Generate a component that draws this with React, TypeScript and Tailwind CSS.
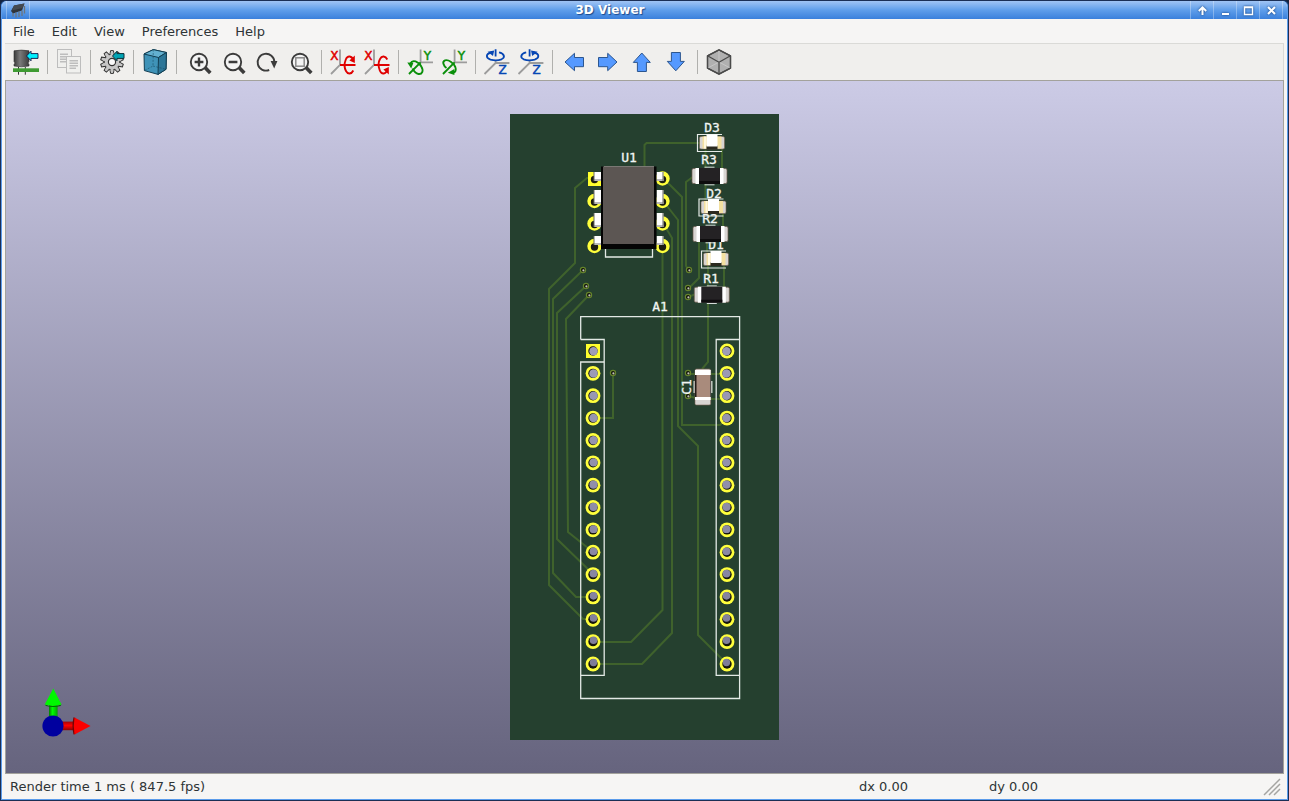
import type { ReactNode } from "react";

const menus = ["File", "Edit", "View", "Preferences", "Help"];

const cyanArrow = "M13.5 7 L18 2.2 V4.6 H25 V9.4 H18 V11.8 Z";

type Tool = { label: string; icon: ReactNode };

function Lens({ children }: { children?: ReactNode }) {
  return (
    <g fill="none" stroke="#3c3c3c" strokeWidth="1.9">
      <path d="M19 18.5 L24.3 24" strokeWidth="3.6" />
      <circle cx="13" cy="13" r="8.2" fill="#f4f4f4" />
      {children}
    </g>
  );
}

function AxisLetter({ x, y, color, children }: { x: number; y: number; color: string; children: string }) {
  return (
    <text x={x} y={y} textAnchor="middle" fill={color} stroke={color} strokeWidth="0.5" className="font-['DejaVu_Sans'] text-[12px]">
      {children}
    </text>
  );
}

function AxisX({ flip }: { flip?: boolean }) {
  return (
    <>
      <path d="M10 0.5 V16 L1 25" fill="none" stroke="#9c9c9c" strokeWidth="1.8" />
      <g fill="none" stroke="#e00000" strokeWidth="1.9" transform={flip ? "translate(0 32) scale(1 -1)" : undefined}>
        <path d="M10 16 H25.5" />
        <path d="M23.3 11.5 C22 6.5 17.5 6.2 15.8 10.5 C14.2 14.5 14.3 19 16 22 C17.8 25.5 21.5 25.2 23.3 21.5" />
        <path d="M24.8 6.4 V14 L19.4 11.6 Z" fill="#e00000" stroke="none" />
      </g>
      <AxisLetter x={4.4} y={11} color="#e00000">
        X
      </AxisLetter>
    </>
  );
}

function AxisY({ flip }: { flip?: boolean }) {
  return (
    <>
      <path d="M13.6 0.5 V13.4 H26" fill="none" stroke="#9c9c9c" strokeWidth="1.8" />
      <g fill="none" stroke="#0a8f0a" strokeWidth="1.9">
        <path d="M13.6 13.4 L2 25" />
        {flip ? (
          <>
            <path d="M5.5 19 C2.5 17 0.8 12.5 4 11.3 C7.5 10.2 12.5 14 14.3 18 C15.5 21 14.5 23.3 12 23.6" />
            <path d="M6.8 23.8 L13.4 20 L13.4 26 Z" fill="#0a8f0a" stroke="none" />
          </>
        ) : (
          <>
            <path d="M3.5 14.5 C5.5 10 11.5 12.5 14.3 17.5 C17 22 15 25.5 11.5 25 C9 24.5 7 22.5 5.5 19.5" />
            <path d="M0.3 13.6 L6.4 13.8 L4.2 19.4 Z" fill="#0a8f0a" stroke="none" />
          </>
        )}
      </g>
      <AxisLetter x={20.5} y={11} color="#0a8f0a">
        Y
      </AxisLetter>
    </>
  );
}

function AxisZ({ flip }: { flip?: boolean }) {
  return (
    <>
      <path d="M11.6 11 V14 H25.4 M11.6 14 L0.5 25" fill="none" stroke="#9c9c9c" strokeWidth="1.8" />
      <g fill="none" stroke="#0646b4" strokeWidth="1.8" transform={flip ? "translate(23.2 0) scale(-1 1)" : undefined}>
        <path d="M11.6 0.3 V7.5" />
        <path d="M7.5 3.5 C1.5 4.8 1.5 9 6.5 10.6 C10 11.6 14.5 11.5 17.5 10.3 C21.5 8.5 20.5 4.6 15 3.4" />
        <path d="M10.2 1.6 L9 7 L3.6 2.8 Z" fill="#0646b4" stroke="none" />
      </g>
      <AxisLetter x={18.6} y={25} color="#0646b4">
        Z
      </AxisLetter>
    </>
  );
}

function PanArrow({ d }: { d: string }) {
  return <path d={d} fill="#5599ff" stroke="#2c568f" strokeWidth="1" strokeLinejoin="round" />;
}

const gearTeeth = [0, 36, 72, 108, 144, 180, 216, 252, 288, 324];

const toolGroups: Tool[][] = [
  [
    {
      label: "Reload board",
      icon: (
        <>
          <defs>
            <linearGradient id="can">
              <stop offset="0" stopColor="#3a3a3a" />
              <stop offset="0.4" stopColor="#7a7a7a" />
              <stop offset="1" stopColor="#3c3c3c" />
            </linearGradient>
          </defs>
          <path d="M1 1.8 Q8.5 0.4 16 1.8 V12.5 L15 14 L16 15.5 V17 Q8.5 18.6 1 17 V15.5 L2 14 L1 12.5 Z" fill="url(#can)" stroke="#2e2e2e" strokeWidth="0.6" />
          <path d="M5.5 18 V25.7 M12.3 18 V25.7" stroke="#333" strokeWidth="1" />
          <rect x="0" y="19.3" width="26" height="3.7" fill="#3f9b33" />
          <path d={cyanArrow} fill="#00f0ff" stroke="#114" strokeWidth="0.9" />
        </>
      ),
    },
  ],
  [
    {
      label: "Copy image",
      icon: (
        <g stroke="#bdbdbd" strokeWidth="1">
          <rect x="1.5" y="0.5" width="14" height="18" fill="#efefed" />
          <path d="M4 5.2 H12 M4 7.7 H12 M4 10.2 H12 M4 12.7 H10" strokeWidth="1.6" />
          <rect x="10.5" y="7.5" width="14" height="16.5" fill="#f0f0ee" />
          <path d="M13.5 11.8 H22 M13.5 14.3 H22 M13.5 16.8 H22 M13.5 19.3 H20" strokeWidth="1.6" />
        </g>
      ),
    },
  ],
  [
    {
      label: "Render options",
      icon: (
        <>
          <g fill="#c6c6c6" stroke="#333" strokeWidth="1">
            {gearTeeth.map((a) => (
              <path key={a} d="M10.8 6 L11.6 1.6 H14.4 L15.2 6" transform={`rotate(${a} 13 13)`} />
            ))}
            <circle cx="13" cy="13" r="7.8" />
          </g>
          {gearTeeth.map((a) => (
            <path key={a} d="M11.4 6.5 L12 2.6 H14 L14.6 6.5 Z" fill="#c6c6c6" transform={`rotate(${a} 13 13)`} />
          ))}
          <circle cx="13" cy="13" r="3.6" fill="#fafafa" stroke="#333" strokeWidth="1.2" />
          <path d={cyanArrow} fill="#00a5b5" stroke="#0c2f38" strokeWidth="1" />
        </>
      ),
    },
  ],
  [
    {
      label: "Raytracing",
      icon: (
        <g stroke="#123e52" strokeWidth="1" strokeLinejoin="round">
          <path d="M2 5 L11.3 0.6 L24.4 3.5 L24 20.3 L16 25.4 L2.4 21.6 Z" fill="#3f93b8" />
          <path d="M2 5 L16.5 8.5 L24.4 3.5 L11.3 0.6 Z" fill="#63b0d0" />
          <path d="M16.5 8.5 L24.4 3.5 L24 20.3 L16 25.4 Z" fill="#2c7698" />
          <path d="M11.3 0.6 L11 17 L2.4 21.6 M11 17 L24 20.3" fill="none" strokeWidth="0.5" strokeDasharray="2 1.4" />
        </g>
      ),
    },
  ],
  [
    { label: "Zoom in", icon: <g transform="translate(1 0)"><Lens><path d="M13 8.6 V17.4 M8.6 13 H17.4" strokeWidth="2.4" /></Lens></g> },
    { label: "Zoom out", icon: <g transform="translate(1 0)"><Lens><path d="M8.6 13 H17.4" strokeWidth="2.4" /></Lens></g> },
    {
      label: "Redraw",
      icon: (
        <>
          <path d="M16.2 21 A8.4 8.4 0 1 1 21.4 13" fill="none" stroke="#3c3c3c" strokeWidth="1.9" />
          <path d="M17.6 12 H24.4 L21.2 19.6 Z" fill="#3c3c3c" />
        </>
      ),
    },
    {
      label: "Zoom to fit",
      icon: (
        <Lens>
          <rect x="8.8" y="8.8" width="8.4" height="8.4" stroke="#8a8a8a" strokeWidth="1.5" />
        </Lens>
      ),
    },
  ],
  [
    { label: "Rotate X clockwise", icon: <AxisX /> },
    { label: "Rotate X counterclockwise", icon: <AxisX flip /> },
  ],
  [
    { label: "Rotate Y clockwise", icon: <AxisY /> },
    { label: "Rotate Y counterclockwise", icon: <AxisY flip /> },
  ],
  [
    { label: "Rotate Z clockwise", icon: <AxisZ /> },
    { label: "Rotate Z counterclockwise", icon: <AxisZ flip /> },
  ],
  [
    { label: "Move left", icon: <PanArrow d="M4 13 L13.5 4.3 V8.5 H22.5 V17.7 H13.5 V21.7 Z" /> },
    { label: "Move right", icon: <PanArrow d="M22 13 L12.7 4.3 V8.5 H3.5 V17.7 H12.7 V21.7 Z" /> },
    { label: "Move up", icon: <PanArrow d="M12.8 4 L21.3 13.4 H17.4 V22.5 H8.4 V13.4 H4.3 Z" /> },
    { label: "Move down", icon: <PanArrow d="M12.8 21.8 L21.3 12.4 H17.4 V3.5 H8.4 V12.4 H4.3 Z" /> },
  ],
  [
    {
      label: "Orthographic projection",
      icon: (
        <g stroke="#4a4a4a" strokeWidth="1.3" strokeLinejoin="round">
          <path d="M13 0.9 L24.5 6.8 V19.2 L13 25.2 L1.5 19.2 V6.8 Z" fill="#b0b0b0" />
          <path d="M13 0.9 V13 M1.5 19.2 L13 13 L24.5 19.2" fill="none" stroke="#c8c8c8" strokeWidth="0.9" />
          <path d="M1.5 6.8 L13 13.2 L24.5 6.8 M13 13.2 V25.2 M13 0.9 L24.5 6.8 V19.2 L13 25.2 L1.5 19.2 V6.8 Z" fill="none" />
        </g>
      ),
    },
  ],
];

const traces = [
  "M594 178 H587 L575 188 V263 L549 289 V585 L583 619 H593",
  "M583 270 L553 299 V573 L576 597 H593",
  "M586 286 L557 313 V539 L593 574",
  "M589 295 L566 319 L568 532 L593 552",
  "M593 418 H613 V373",
  "M644.5 170 V145 L646.5 143 H700",
  "M663 178 L682 197 V425 H720 L727 418",
  "M663 201 L678 220 V426 L698 446 V635 L727 664",
  "M663 223 L672 238 V633 L642 664 H593",
  "M662.5 246 V610 L631 642 H593",
  "M694 176 L686 182 V266 L689 270",
  "M699 240 V278 L689 288",
  "M688 297 L696 294",
  "M722 148 V168 M705.5 150 V200 M723 210 V228 M707 240 V252 M724 265 V288 M708 262 V288",
  "M708 302 V362 L702 369",
  "M688 374 H727 M688 396 L700 399 H727",
];

const vias = [
  [583, 270],
  [586, 286],
  [589, 295],
  [689, 270],
  [688, 288],
  [688, 297],
  [613, 373],
  [688, 373],
  [688, 396],
];

const headerPins = Array.from({ length: 15 }, (_, i) => 351 + (i * 313) / 14);

// the drill wall shows as a dark crescent that grows away from the view centre
function HeaderPad({ x, y, square }: { x: number; y: number; square?: boolean }) {
  const dx = x < 645 ? 0.5 : -0.5;
  const dy = (400 - y) * 0.008;
  return (
    <>
      {square ? (
        <rect x={x - 7} y={y - 7} width="14" height="14" fill="#ffff2e" />
      ) : (
        <circle cx={x} cy={y} r="7.4" fill="#ffff3c" />
      )}
      <circle cx={x} cy={y} r="4.7" fill="#15150c" />
      <circle cx={x + dx} cy={y + dy * 0.7} r={4.3 - Math.abs(dy) * 0.3} fill="url(#sky)" />
    </>
  );
}

function ChipPin({ x, y, top, height, square }: { x: number; y: number; top: number; height: number; square?: boolean }) {
  const left = x < 628;
  const pinX = left ? 594 : 656.5;
  return (
    <>
      {square ? (
        <rect x={x - 6.5} y={y - 6.5} width="14" height="14" fill="#ffff2e" />
      ) : (
        <circle cx={x} cy={y} r="7.2" fill="#ffff3c" />
      )}
      <circle cx={x} cy={y + 1} r="3.7" fill="#1d1d12" />
      <rect x={pinX} y={top} width="7" height={height} fill="#fff" />
      <rect x={pinX} y={top + height - 2} width="7" height="2" fill="#b9b9b9" />
      <rect x={left ? pinX - 0.5 : pinX + 6} y={top} width="1" height={height} fill="#6b6b60" />
    </>
  );
}

function Resistor({ x, y }: { x: number; y: number }) {
  return (
    <g transform={`translate(${x} ${y})`}>
      <path d="M-5 -8.8 H5 M-5 8.8 H5" stroke="#d6dcd8" />
      <rect x="-17.5" y="-7.5" width="35" height="15" rx="1.5" fill="#d9d6d3" stroke="#6f5a4e" strokeWidth="0.7" />
      <rect x="-14" y="-8" width="28" height="16" fill="#fff" />
      <rect x="-10.5" y="-8" width="21" height="16" fill="#242224" />
      <rect x="-10.5" y="5" width="21" height="3" fill="#0e0d0e" />
    </g>
  );
}

function Led({ x, y }: { x: number; y: number }) {
  return (
    <g transform={`translate(${x} ${y})`}>
      <path d="M10 -8 H-14.5 V9 H10" fill="none" stroke="#e6ebe8" strokeWidth="1.2" />
      <rect x="-12.5" y="-6" width="25" height="12.5" rx="1.5" fill="#d7d4d2" stroke="#76604f" strokeWidth="0.6" />
      <rect x="-9.5" y="-6" width="19" height="12" fill="#f3e0a0" />
      <rect x="-8" y="-6" width="2" height="12" fill="#fff8dd" />
      <rect x="-5.5" y="3" width="11" height="4" fill="#2b2a20" />
      <rect x="-5.5" y="-8" width="11" height="12" fill="#fff" />
    </g>
  );
}

function Board() {
  return (
    <svg viewBox="510 114 269 626" className="h-[626px] w-[269px]" role="img" aria-label="Board">
      <defs>
        <linearGradient id="sky" gradientUnits="userSpaceOnUse" x1="0" y1="81" x2="0" y2="773">
          <stop offset="0" stopColor="#b8b7d0" />
          <stop offset="1" stopColor="#74728e" />
        </linearGradient>
      </defs>
      <rect x="510" y="114" width="269" height="626" fill="#25402f" />
      <g fill="none" stroke="#3f622c" strokeWidth="2">
        {traces.map((d) => (
          <path key={d} d={d} />
        ))}
      </g>
      {vias.map(([x, y]) => (
        <g key={`${x}-${y}`}>
          <circle cx={x} cy={y} r="2.6" fill="#0c0e06" stroke="#66842c" strokeWidth="1.2" />
          <circle cx={x + 0.4} cy={y + 0.4} r="1.1" fill="#c4c3ba" />
        </g>
      ))}

      {headerPins.map((y, i) => (
        <g key={y}>
          <HeaderPad x={593} y={y} square={i === 0} />
          <HeaderPad x={727} y={y} />
        </g>
      ))}

      <g fill="none" stroke="#e3e9e5" strokeWidth="1.3">
        <path d="M580.7 339.5 V316.7 H739.6 V698.5 H580.7 V362 H604.2" />
        <path d="M580.7 339.5 H604.2 V675.3 H580.7" />
        <path d="M739.6 339.5 H716.2 V675.3 H739.6" />
        <path d="M605.5 249 V257 H652.5 V249" />
        <path d="M694.2 381 V393 M711.8 381 V393" />
      </g>

      <g
        fill="#f2f5f3"
        stroke="#f2f5f3"
        strokeWidth="0.3"
        textAnchor="middle"
        className="font-['DejaVu_Sans_Mono',monospace] text-[13px]"
      >
        <text x="629" y="162">U1</text>
        <text x="712" y="132">D3</text>
        <text x="709" y="164">R3</text>
        <text x="714" y="198">D2</text>
        <text x="710" y="223">R2</text>
        <text x="716" y="249">D1</text>
        <text x="711" y="283">R1</text>
        <text x="660" y="311">A1</text>
        <text transform="translate(691 387) rotate(-90)">C1</text>
      </g>

      <ChipPin x={594.5} y={178.5} top={172} height={9} square />
      <ChipPin x={594.5} y={201} top={190} height={14} />
      <ChipPin x={594.5} y={223.5} top={213} height={14} />
      <ChipPin x={594.5} y={246} top={236} height={9} />
      <ChipPin x={662.5} y={178.5} top={172} height={9} />
      <ChipPin x={662.5} y={201} top={190} height={14} />
      <ChipPin x={662.5} y={223.5} top={213} height={14} />
      <ChipPin x={662.5} y={246} top={236} height={9} />
      <rect x="601" y="166.5" width="55.5" height="82.5" fill="#050505" />
      <rect x="603" y="166.5" width="51" height="77.5" fill="#5c5653" />
      <path d="M604 166.5 H654" stroke="#8c8885" strokeWidth="0.8" />

      <Led x={712} y={142.5} />
      <Led x={713.5} y={207} />
      <Led x={716} y={259} />
      <Resistor x={709.5} y={176} />
      <Resistor x={710.5} y={234} />
      <Resistor x={711.8} y={294.7} />

      <rect x="695" y="369" width="15.7" height="36" rx="1.5" fill="#d8d5d2" stroke="#7c6254" strokeWidth="0.6" />
      <rect x="695" y="370" width="15.7" height="30" fill="#fff" />
      <rect x="695" y="375" width="15.7" height="22" fill="#231b17" />
      <rect x="696.5" y="375" width="13.5" height="22" fill="#a98b7c" />
    </svg>
  );
}

function AxisGizmo() {
  return (
    <svg viewBox="40 686 52 52" className="absolute bottom-[35px] left-[34px] size-[52px]" aria-hidden>
      <defs>
        <linearGradient id="green">
          <stop offset="0" stopColor="#067a06" />
          <stop offset="0.4" stopColor="#00ff00" />
          <stop offset="1" stopColor="#05a005" />
        </linearGradient>
        <linearGradient id="red" x1="0" y1="0" x2="0" y2="1">
          <stop offset="0" stopColor="#a00505" />
          <stop offset="0.45" stopColor="#ff0000" />
          <stop offset="1" stopColor="#8a0404" />
        </linearGradient>
      </defs>
      <rect x="49" y="703" width="8.6" height="16" fill="url(#green)" />
      <path d="M44.7 704.5 Q53 707.5 61.5 704.5 L60.5 706 Q53 707.8 46 706 Z" fill="#046604" />
      <path d="M53.3 688.5 L61.5 704.5 Q53 706.5 44.7 704.5 Z" fill="#00f800" />
      <rect x="62" y="721.6" width="12" height="8.6" fill="url(#red)" />
      <path d="M73.5 717.3 Q71.5 726 73.5 734.6 L75.5 734 V718 Z" fill="#6e0404" />
      <path d="M90.5 726 L74.5 717.5 Q73 726 74.5 734.5 Z" fill="#fb0000" />
      <circle cx="53" cy="726" r="10.6" fill="#00009f" />
    </svg>
  );
}

const windowButtons = [
  { label: "Shade", icon: <path d="M6.5 11 V4 M2.8 7 L6.5 3.4 L10.2 7" strokeWidth="2" /> },
  { label: "Minimize", icon: <path d="M3 10 H10" strokeWidth="2" /> },
  { label: "Maximize", icon: <path d="M2.5 3 H10.5 V10.5 H2.5 Z M2.5 3.6 H10.5" strokeWidth="1.4" /> },
  { label: "Close", icon: <path d="M3 3 L10 10 M10 3 L3 10" strokeWidth="2.1" /> },
];

function TitleBar() {
  return (
    <header className="flex h-[18px] items-stretch bg-linear-to-b from-[#a0c4f4] via-[#5f9eea] to-[#3a80dc]">
      <div className="ml-1 flex w-6 items-center justify-center border-x border-white/30">
        <svg viewBox="0 0 16 16" className="size-4" aria-hidden>
          <path d="M1 9 L4 3.5 L14.5 1.5 L12 8.5 L3 11.5 Z" fill="#30343a" />
          <path d="M3 11 V14.5 M6 10.5 V15.5 M9 9.5 V15 M12 8.5 V14 M14.5 4 V11.5" stroke="#6c757d" strokeWidth="1.3" />
          <path d="M4 3.5 L14.5 1.5 L12.5 6 L2 8.5 Z" fill="#454a50" />
        </svg>
      </div>
      <h1 className="flex-1 text-center text-[12px] leading-[18px] font-bold text-white [text-shadow:1px_1px_1px_#1c4a8c]">
        3D Viewer
      </h1>
      <div className="mr-1 flex border-r border-white/30">
        {windowButtons.map((b) => (
          <button key={b.label} aria-label={b.label} className="flex w-[23px] items-center justify-center border-l border-white/30">
            <svg viewBox="0 0 13 13" className="size-[13px] drop-shadow-[0_0_1px_#123c78]" fill="none" stroke="#fff">
              {b.icon}
            </svg>
          </button>
        ))}
      </div>
    </header>
  );
}

function Toolbar() {
  return (
    <div role="toolbar" className="mx-[3px] flex h-[37px] items-center border-t border-r border-[#dadad7] bg-[#f0efed] pl-1">
      {toolGroups.map((group, i) => (
        <div key={group[0].label} className="flex items-center">
          {i > 0 && (
            <div className="flex w-[9px] justify-center">
              <div className="h-6 w-px bg-[#b0b0ad]" />
            </div>
          )}
          {group.map((tool) => (
            <button key={tool.label} title={tool.label} aria-label={tool.label} className="flex w-[34px] justify-center">
              <svg viewBox="0 0 26 26" className="size-[26px] overflow-visible">
                {tool.icon}
              </svg>
            </button>
          ))}
        </div>
      ))}
    </div>
  );
}

function StatusBar() {
  return (
    <footer className="flex h-[25px] items-center pr-[6px] pl-2">
      <span className="flex-1">Render time 1 ms ( 847.5 fps)</span>
      <span className="w-[130px]">dx 0.00</span>
      <span className="w-[130px]">dy 0.00</span>
      <span className="w-[130px]" />
      <span className="flex w-8 justify-end">
        <svg viewBox="0 0 18 18" className="size-[18px]" fill="none" stroke="#a5a5a2" strokeWidth="1.5" aria-hidden>
          <path d="M1 17 L17 1 M6 17 L17 6 M11 17 L17 11" />
        </svg>
      </span>
    </footer>
  );
}

export default function App() {
  return (
    <div className="min-h-screen bg-[#14233f]">
      <div className="flex min-h-screen flex-col rounded-t-md border border-[#1b2f55] bg-[#3f85de] font-['DejaVu_Sans',sans-serif] text-[13px] text-[#2e3436]">
        <div className="flex flex-1 flex-col overflow-hidden rounded-t-md border-x border-b border-[#5b9bea] bg-[#f6f5f4]">
          <TitleBar />
          <nav className="flex h-6 items-center gap-px pt-px pl-[3px]">
            {menus.map((m) => (
              <button key={m} className="px-2">
                {m}
              </button>
            ))}
          </nav>
          <Toolbar />
          <main className="relative mx-[3px] grid flex-1 place-items-center border border-[#a3a29c] bg-linear-to-b from-[#cccbe6] to-[#66647e]">
            <Board />
            <AxisGizmo />
          </main>
          <StatusBar />
        </div>
      </div>
    </div>
  );
}
